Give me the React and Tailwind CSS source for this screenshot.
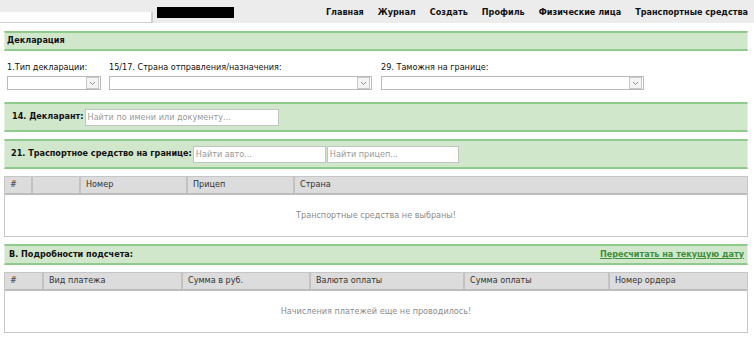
const font = { fontFamily: '"DejaVu Sans", Tahoma, sans-serif', fontStretch: 'condensed' };

function Select({ w }) {
  return (
    <div className={`h-[16px] ${w} border border-[#b9b9b9] bg-white flex justify-end items-center pr-[1px]`}>
      <div className="w-[13px] h-[12px] border border-[#c9c9c9] bg-[#f4f4f4] flex items-center justify-center">
        <svg width="7" height="5" viewBox="0 0 7 5">
          <path d="M1 1 L3.5 3.5 L6 1" fill="none" stroke="#8a8a8a" strokeWidth="1" />
        </svg>
      </div>
    </div>
  );
}

function Bar({ children, className = '' }) {
  return (
    <div className={`bg-[#d1e7cb] border-y-2 border-[#8fcb8a] border-x border-x-[#e3efe0] flex items-center pr-[3px] ${className}`}>
      {children}
    </div>
  );
}

function Search({ w, placeholder }) {
  return (
    <input
      className={`h-[17px] ${w} border border-[#c4c4c4] bg-white px-[2px] text-[9px] outline-none placeholder:text-[#9a9a9a]`}
      style={font}
      placeholder={placeholder}
    />
  );
}

function Table({ cols, empty }) {
  return (
    <div className="border border-[#c6c6c6]">
      <div className="flex h-[18px] bg-[#dcdcdc] border-b-2 border-[#bdbdbd] text-[#333]">
        {cols.map(([w, t], i) => (
          <div key={i} className={`${w} flex items-center pl-[5px] ${i > 0 ? 'border-l-2 border-[#c2c2c2]' : ''}`}>
            {t}
          </div>
        ))}
      </div>
      <div className="h-[41px] flex items-center justify-center text-[#8c8c8c]">{empty}</div>
    </div>
  );
}

export default function App() {
  return (
    <div className="w-[754px] h-[340px] overflow-hidden bg-white text-[9px] text-[#111]" style={font}>
      {/* top header */}
      <div className="h-[23px] bg-[#ececec] flex">
        <div className="w-[153px] flex flex-col">
          <div className="h-[12px]" />
          <div className="h-[11px] bg-white border-r-2 border-b border-[#cfcfcf]" />
        </div>
        <div className="ml-[4px] mt-[7px] w-[77px] h-[11px] bg-black" />
        <nav className="ml-auto flex items-center gap-[14px] pr-[6px] pt-[2px] font-bold text-[#111]">
          <span>Главная</span>
          <span>Журнал</span>
          <span>Создать</span>
          <span>Профиль</span>
          <span>Физические лица</span>
          <span>Транспортные средства</span>
        </nav>
      </div>

      <div className="w-[744px] ml-[4px]">
        <Bar className="mt-[8px] h-[20px] pl-[2px] font-bold">Декларация</Bar>

        <div className="flex mt-[11px] h-[28px]">
          <div className="w-[101px] pl-[3px] flex flex-col gap-[3px]">
            <span className="leading-[11px]">1.Тип декларации:</span>
            <Select w="w-[94px]" />
          </div>
          <div className="w-[272px] pl-[4px] flex flex-col gap-[3px]">
            <span className="leading-[11px]">15/17. Страна отправления/назначения:</span>
            <Select w="w-[263px]" />
          </div>
          <div className="w-[272px] pl-[4px] flex flex-col gap-[3px]">
            <span className="leading-[11px]">29. Таможня на границе:</span>
            <Select w="w-[263px]" />
          </div>
        </div>

        <Bar className="mt-[12px] h-[30px] pl-[7px] gap-[1px]">
          <span className="font-bold">14. Декларант:</span>
          <Search w="w-[194px]" placeholder="Найти по имени или документу..." />
        </Bar>

        <Bar className="mt-[7px] h-[30px] pl-[6px] gap-[1px]">
          <span className="font-bold">21. Траспортное средство на границе:</span>
          <Search w="w-[133px]" placeholder="Найти авто..." />
          <Search w="w-[132px]" placeholder="Найти прицеп..." />
        </Bar>

        <div className="mt-[7px]">
          <Table
            cols={[
              ['w-[26px]', '#'],
              ['w-[48px]', ''],
              ['w-[107px]', 'Номер'],
              ['w-[107px]', 'Прицеп'],
              ['flex-1', 'Страна'],
            ]}
            empty="Транспортные средства не выбраны!"
          />
        </div>

        <Bar className="mt-[7px] h-[21px] pl-[4px] justify-between">
          <span className="font-bold">В. Подробности подсчета:</span>
          <a href="#" className="font-bold text-[#3f8f3a] underline">Пересчитать на текущую дату</a>
        </Bar>

        <div className="mt-[7px]">
          <Table
            cols={[
              ['w-[37px]', '#'],
              ['w-[139px]', 'Вид платежа'],
              ['w-[128px]', 'Сумма в руб.'],
              ['w-[154px]', 'Валюта оплаты'],
              ['w-[145px]', 'Сумма оплаты'],
              ['flex-1', 'Номер ордера'],
            ]}
            empty="Начисления платежей еще не проводилось!"
          />
        </div>
      </div>
    </div>
  );
}
